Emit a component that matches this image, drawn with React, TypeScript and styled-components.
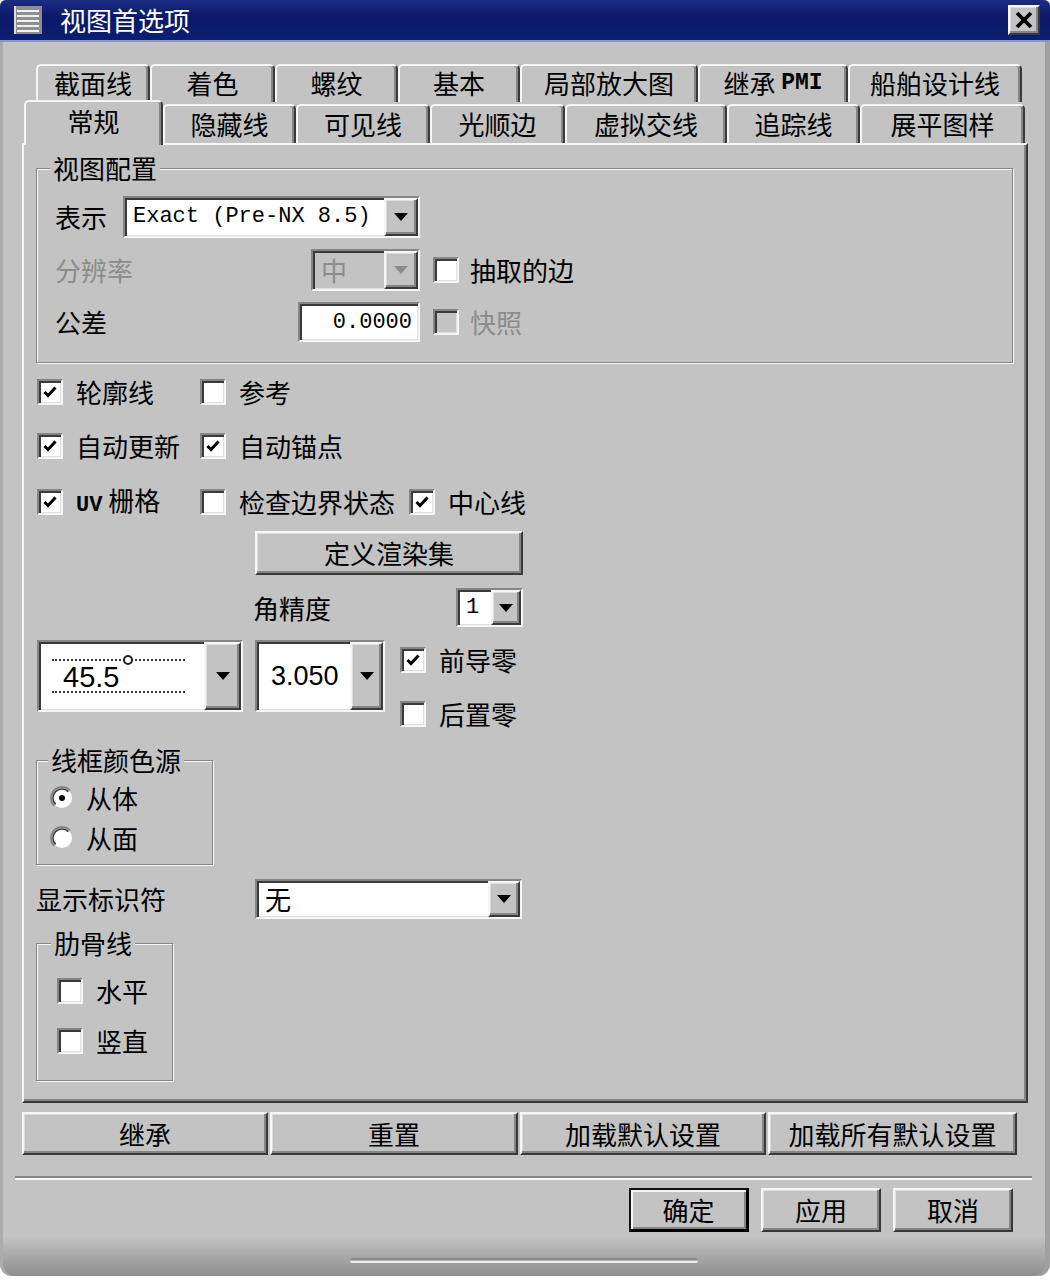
import React from "react";
import styled, { createGlobalStyle, css } from "styled-components";

const FACE = "#c3c3c3";
const LIGHT = "#f6f6f6";
const SHADOW = "#858585";
const DARK = "#3a3a3a";
const CJK = `"Noto Sans CJK SC", "Noto Sans", sans-serif`;
const MONO = `"Liberation Mono", "DejaVu Sans Mono", monospace`;
const SANS = `"Liberation Sans", Arial, sans-serif`;

const GlobalStyle = createGlobalStyle`
  *, *::before, *::after { box-sizing: border-box; }
  html, body { margin: 0; padding: 0; background: #ffffff; }
  body { font-family: ${CJK}; color: #000; }
`;

const raised = css`
  border-style: solid;
  border-width: 2px;
  border-color: ${LIGHT} ${DARK} ${DARK} ${LIGHT};
  box-shadow: inset -2px -2px ${SHADOW}, inset 1px 1px #dedede;
`;

const sunken = css`
  border-style: solid;
  border-width: 2px;
  border-color: ${SHADOW} ${LIGHT} ${LIGHT} ${SHADOW};
  box-shadow: inset 2px 2px ${DARK}, inset -1px -1px #dedede;
`;

const Window = styled.div`
  width: 1050px;
  height: 1276px;
  display: flex;
  flex-direction: column;
  background: linear-gradient(to bottom, ${FACE} calc(100% - 40px), #8e8e8e);
  border-radius: 6px 6px 12px 12px;
  overflow: hidden;
  box-shadow: inset 3px 0 #acacac, inset -5px 0 #a0a0a0;
`;

const TitleBar = styled.div`
  flex: none;
  height: 42px;
  display: flex;
  align-items: center;
  padding: 0 10px 0 14px;
  background: linear-gradient(to bottom, #1c2c84 0%, #0a1868 45%, #0d1f72 100%);
  border-bottom: 2px solid #8597cc;
`;

const TitleText = styled.span`
  margin-left: 18px;
  color: #fff;
  font-size: 26px;
  line-height: 1;
`;

const CloseButton = styled.div`
  ${raised};
  margin-left: auto;
  width: 32px;
  height: 30px;
  background: ${FACE};
  display: flex;
  align-items: center;
  justify-content: center;
`;

const Body = styled.div`
  flex: 1;
  display: flex;
  flex-direction: column;
  padding: 22px 22px 0 22px;
`;

const TabRow = styled.div<{ $inset: number; $front?: boolean }>`
  display: flex;
  align-items: flex-end;
  margin-left: ${(p) => p.$inset}px;
  margin-top: ${(p) => (p.$front ? -2 : 0)}px;
`;

const Tab = styled.div<{ $w: number; $h: number; $active?: boolean }>`
  position: relative;
  z-index: ${(p) => (p.$active ? 2 : 1)};
  flex: none;
  width: ${(p) => p.$w}px;
  height: ${(p) => p.$h}px;
  margin-bottom: ${(p) => (p.$active ? -2 : 0)}px;
  padding-bottom: ${(p) => (p.$active ? 6 : 2)}px;
  display: flex;
  align-items: center;
  justify-content: center;
  background: ${FACE};
  border-top: 2px solid ${LIGHT};
  border-left: 2px solid ${LIGHT};
  border-right: 2px solid ${DARK};
  box-shadow: inset -2px 0 ${SHADOW};
  border-radius: 5px 5px 0 0;
  font-size: 26px;
  line-height: 1;
  white-space: nowrap;
`;

const Latin = styled.span<{ $size?: number }>`
  font-family: ${MONO};
  font-size: ${(p) => p.$size ?? 23}px;
  font-weight: 700;
`;

const Panel = styled.div`
  height: 960px;
  display: flex;
  flex-direction: column;
  align-items: flex-start;
  padding: 0 13px 0 12px;
  border-style: solid;
  border-width: 2px;
  border-color: ${LIGHT} ${DARK} ${DARK} ${LIGHT};
  box-shadow: inset -2px -2px ${SHADOW};
`;

const Group = styled.fieldset<{ $w: number; $top: number; $pad: string }>`
  width: ${(p) => p.$w}px;
  min-width: 0;
  margin: ${(p) => p.$top}px 0 0 0;
  padding: ${(p) => p.$pad};
  border: 1px solid ${SHADOW};
  box-shadow: inset 1px 1px ${LIGHT}, 1px 1px ${LIGHT};
`;

const Legend = styled.legend<{ $shift?: number }>`
  margin-left: ${(p) => p.$shift ?? -2}px;
  padding: 0 3px;
  font-size: 26px;
  line-height: 26px;
  background: ${FACE};
`;

const ConfigGrid = styled.div`
  display: grid;
  grid-template-columns: 55px 297px auto;
  column-gap: 13px;
  row-gap: 11px;
  align-items: center;
`;

const Label = styled.span<{ $disabled?: boolean }>`
  font-size: 26px;
  line-height: 1;
  white-space: nowrap;
  color: ${(p) => (p.$disabled ? "#8c8c8c" : "#000")};
`;

const ComboBox = styled.div<{ $w: number; $h: number; $disabled?: boolean; $start?: boolean }>`
  ${sunken};
  justify-self: ${(p) => (p.$start ? "start" : "end")};
  width: ${(p) => p.$w}px;
  height: ${(p) => p.$h}px;
  display: flex;
  background: ${(p) => (p.$disabled ? FACE : "#fff")};
`;

const ComboValue = styled.div<{
  $font?: "mono" | "sans" | "cjk";
  $size?: number;
  $pad?: number;
  $disabled?: boolean;
}>`
  flex: 1;
  display: flex;
  align-items: center;
  padding-left: ${(p) => p.$pad ?? 8}px;
  font-family: ${(p) => (p.$font === "mono" ? MONO : p.$font === "sans" ? SANS : CJK)};
  font-size: ${(p) => p.$size ?? 26}px;
  line-height: 1;
  white-space: nowrap;
  color: ${(p) => (p.$disabled ? "#8c8c8c" : "#000")};
`;

const ArrowButton = styled.div<{ $w: number }>`
  ${raised};
  flex: none;
  width: ${(p) => p.$w}px;
  background: ${FACE};
  display: flex;
  align-items: center;
  justify-content: center;
`;

const TextField = styled.div<{ $w: number }>`
  ${sunken};
  justify-self: end;
  width: ${(p) => p.$w}px;
  height: 40px;
  background: #fff;
  display: flex;
  align-items: center;
  justify-content: flex-end;
  padding-right: 6px;
  font-family: ${MONO};
  font-size: 22px;
`;

const CheckItem = styled.div<{ $gap?: number }>`
  display: flex;
  align-items: center;
  gap: ${(p) => p.$gap ?? 13}px;
`;

const Box = styled.div<{ $disabled?: boolean }>`
  ${sunken};
  flex: none;
  width: 26px;
  height: 26px;
  background: ${(p) => (p.$disabled ? FACE : "#fff")};
  display: flex;
  align-items: center;
  justify-content: center;
`;

const CheckGrid = styled.div`
  margin-top: 16px;
  display: grid;
  grid-template-columns: 149px auto auto;
  column-gap: 14px;
  row-gap: 28px;
  align-items: center;
  padding-left: 1px;
`;

const ToolGrid = styled.div`
  margin-top: 14px;
  display: grid;
  grid-template-columns: 206px 133px 123px;
  column-gap: 12px;
  row-gap: 13px;
  align-items: start;
  padding-left: 1px;
`;

const PushButton = styled.div<{ $w?: number; $h: number; $default?: boolean; $span?: string }>`
  ${raised};
  grid-column: ${(p) => p.$span ?? "auto"};
  width: ${(p) => (p.$w ? `${p.$w}px` : "auto")};
  height: ${(p) => p.$h}px;
  background: ${FACE};
  display: flex;
  align-items: center;
  justify-content: center;
  font-size: 26px;
  line-height: 1;
  white-space: nowrap;
  ${(p) =>
    p.$default &&
    css`
      border-color: #111 #000 #000 #111;
      border-width: 2px 3px 3px 2px;
      box-shadow: inset 2px 2px ${LIGHT}, inset -2px -2px ${SHADOW};
    `}
`;

const AngleLabel = styled(Label)`
  grid-column: 2;
  align-self: center;
  margin-left: -2px;
`;

const AngleFrame = styled.div`
  display: flex;
  align-items: flex-start;
  margin-left: 5px;
  width: 133px;
  padding: 5px 0 3px 11px;
  border-top: 2px dotted #333;
  border-bottom: 2px dotted #333;
  font-family: ${SANS};
  font-size: 29px;
  line-height: 22px;
`;

const Degree = styled.span`
  width: 10px;
  height: 10px;
  margin: -11px 0 0 4px;
  border: 2px solid #222;
  border-radius: 50%;
  background: #fff;
`;

const ZeroStack = styled.div`
  display: flex;
  flex-direction: column;
  gap: 28px;
  padding-top: 7px;
`;

const RadioList = styled.div`
  display: flex;
  flex-direction: column;
  gap: 14px;
`;

const IdRow = styled.div`
  margin-top: 14px;
  display: grid;
  grid-template-columns: 219px 267px;
  align-items: center;
`;

const RibList = styled.div`
  display: flex;
  flex-direction: column;
  gap: 24px;
`;

const ActionRow = styled.div`
  margin-top: 9px;
  width: 995px;
  display: grid;
  grid-template-columns: 246px 248px 246px 249px;
  column-gap: 2px;
`;

const Separator = styled.div`
  margin: 21px -4px 0 -7px;
  border-top: 2px solid ${SHADOW};
  border-bottom: 2px solid ${LIGHT};
`;

const Footer = styled.div`
  margin: 8px 15px 0 0;
  display: flex;
  justify-content: flex-end;
  gap: 12px;
`;

const Grip = styled.div`
  margin: 26px 0 0 328px;
  width: 348px;
  height: 5px;
  border-radius: 3px;
  border-top: 2px solid #8a8a8a;
  border-bottom: 2px solid #ececec;
  background: #b0b0b0;
`;

const DownArrow = ({ color = "#000" }: { color?: string }) => (
  <svg width="14" height="8" viewBox="0 0 14 8">
    <path d="M0 0 H14 L7 8 Z" fill={color} />
  </svg>
);

const CheckMark = () => (
  <svg width="16" height="16" viewBox="0 0 16 16">
    <path d="M2.5 8 L6 11.5 L13.5 3.5" fill="none" stroke="#000" strokeWidth="3" />
  </svg>
);

const Check = ({ on, disabled }: { on?: boolean; disabled?: boolean }) => (
  <Box $disabled={disabled}>{on && <CheckMark />}</Box>
);

const Radio = ({ on }: { on?: boolean }) => (
  <svg width="24" height="24" viewBox="0 0 24 24">
    <circle cx="12" cy="12" r="10" fill="#fff" />
    <path d="M4.2 19.8 A11 11 0 0 1 19.8 4.2" fill="none" stroke="#858585" strokeWidth="2" />
    <path d="M5.6 18.4 A9 9 0 0 1 18.4 5.6" fill="none" stroke="#3a3a3a" strokeWidth="1.5" />
    {on && <circle cx="12" cy="12" r="3" fill="#000" />}
  </svg>
);

const Combo = (props: {
  w: number;
  h: number;
  arrow: number;
  value: React.ReactNode;
  font?: "mono" | "sans" | "cjk";
  size?: number;
  pad?: number;
  start?: boolean;
  disabled?: boolean;
}) => (
  <ComboBox $w={props.w} $h={props.h} $disabled={props.disabled} $start={props.start}>
    <ComboValue $font={props.font} $size={props.size} $pad={props.pad} $disabled={props.disabled}>
      {props.value}
    </ComboValue>
    <ArrowButton $w={props.arrow}>
      <DownArrow color={props.disabled ? "#8c8c8c" : "#000"} />
    </ArrowButton>
  </ComboBox>
);

const backTabs = [
  { label: "截面线", w: 114 },
  { label: "着色", w: 125 },
  { label: "螺纹", w: 123 },
  { label: "基本", w: 122 },
  { label: "局部放大图", w: 178 },
  { label: "继承 PMI", w: 150 },
  { label: "船舶设计线", w: 174 },
];

const frontTabs = [
  { label: "常规", w: 139 },
  { label: "隐藏线", w: 133 },
  { label: "可见线", w: 134 },
  { label: "光顺边", w: 135 },
  { label: "虚拟交线", w: 162 },
  { label: "追踪线", w: 133 },
  { label: "展平图样", w: 165 },
];

const renderTabLabel = (label: string) => {
  if (label === "继承 PMI") {
    return (
      <>
        继承&nbsp;<Latin>PMI</Latin>
      </>
    );
  }
  return label;
};

export default function App() {
  return (
    <>
      <GlobalStyle />
      <Window>
        <TitleBar>
          <svg width="28" height="28" viewBox="0 0 28 28">
            <rect x="0" y="0" width="28" height="28" fill="#8f8f8f" />
            <rect x="0" y="0" width="2" height="28" fill="#dcdcdc" />
            {[4, 9, 14, 19, 24].map((y) => (
              <rect key={y} x="3" y={y} width="22" height="2" fill="#f2f2f2" />
            ))}
          </svg>
          <TitleText>视图首选项</TitleText>
          <CloseButton>
            <svg width="18" height="16" viewBox="0 0 18 16">
              <path d="M2 1 L16 15 M16 1 L2 15" stroke="#000" strokeWidth="3.6" />
            </svg>
          </CloseButton>
        </TitleBar>

        <Body>
          <TabRow $inset={14}>
            {backTabs.map((t) => (
              <Tab key={t.label} $w={t.w} $h={38}>
                {renderTabLabel(t.label)}
              </Tab>
            ))}
          </TabRow>
          <TabRow $inset={2} $front>
            {frontTabs.map((t, i) => (
              <Tab key={t.label} $w={t.w} $h={i === 0 ? 45 : 39} $active={i === 0}>
                {t.label}
              </Tab>
            ))}
          </TabRow>

          <Panel>
            <Group $w={977} $top={10} $pad="15px 18px 20px 18px">
              <Legend $shift={-5}>视图配置</Legend>
              <ConfigGrid>
                <Label>表示</Label>
                <Combo w={297} h={42} arrow={34} value="Exact (Pre-NX 8.5)" font="mono" size={22} />
                <span />
                <Label $disabled>分辨率</Label>
                <Combo w={109} h={42} arrow={34} value="中" disabled />
                <CheckItem $gap={11}>
                  <Check />
                  <Label>抽取的边</Label>
                </CheckItem>
                <Label>公差</Label>
                <TextField $w={122}>0.0000</TextField>
                <CheckItem $gap={11}>
                  <Check disabled />
                  <Label $disabled>快照</Label>
                </CheckItem>
              </ConfigGrid>
            </Group>

            <CheckGrid>
              <CheckItem>
                <Check on />
                <Label>轮廓线</Label>
              </CheckItem>
              <CheckItem>
                <Check />
                <Label>参考</Label>
              </CheckItem>
              <span />
              <CheckItem>
                <Check on />
                <Label>自动更新</Label>
              </CheckItem>
              <CheckItem>
                <Check on />
                <Label>自动锚点</Label>
              </CheckItem>
              <span />
              <CheckItem>
                <Check on />
                <Label>
                  <Latin $size={22}>UV</Latin> 栅格
                </Label>
              </CheckItem>
              <CheckItem>
                <Check />
                <Label>检查边界状态</Label>
              </CheckItem>
              <CheckItem>
                <Check on />
                <Label>中心线</Label>
              </CheckItem>
            </CheckGrid>

            <ToolGrid>
              <PushButton $h={44} $span="2 / 4">
                定义渲染集
              </PushButton>
              <AngleLabel>角精度</AngleLabel>
              <Combo w={67} h={39} arrow={30} value="1" font="mono" size={22} />
              <Combo
                w={206}
                h={72}
                arrow={37}
                value={
                  <AngleFrame>
                    45.5
                    <Degree />
                  </AngleFrame>
                }
                font="sans"
              />
              <Combo w={130} h={72} arrow={33} value="3.050" font="sans" size={27} pad={14} start />
              <ZeroStack>
                <CheckItem>
                  <Check on />
                  <Label>前导零</Label>
                </CheckItem>
                <CheckItem>
                  <Check />
                  <Label>后置零</Label>
                </CheckItem>
              </ZeroStack>
            </ToolGrid>

            <Group $w={177} $top={20} $pad="12px 10px 13px 13px">
              <Legend>线框颜色源</Legend>
              <RadioList>
                <CheckItem $gap={12}>
                  <Radio on />
                  <Label>从体</Label>
                </CheckItem>
                <CheckItem $gap={12}>
                  <Radio />
                  <Label>从面</Label>
                </CheckItem>
              </RadioList>
            </Group>

            <IdRow>
              <Label>显示标识符</Label>
              <Combo w={267} h={40} arrow={32} value="无" />
            </IdRow>

            <Group $w={137} $top={11} $pad="22px 10px 26px 20px">
              <Legend $shift={-6}>肋骨线</Legend>
              <RibList>
                <CheckItem>
                  <Check />
                  <Label>水平</Label>
                </CheckItem>
                <CheckItem>
                  <Check />
                  <Label>竖直</Label>
                </CheckItem>
              </RibList>
            </Group>
          </Panel>

          <ActionRow>
            <PushButton $h={43}>继承</PushButton>
            <PushButton $h={43}>重置</PushButton>
            <PushButton $h={43}>加载默认设置</PushButton>
            <PushButton $h={43}>加载所有默认设置</PushButton>
          </ActionRow>

          <Separator />

          <Footer>
            <PushButton $w={120} $h={44} $default>
              确定
            </PushButton>
            <PushButton $w={120} $h={44}>
              应用
            </PushButton>
            <PushButton $w={120} $h={44}>
              取消
            </PushButton>
          </Footer>

          <Grip />
        </Body>
      </Window>
    </>
  );
}
